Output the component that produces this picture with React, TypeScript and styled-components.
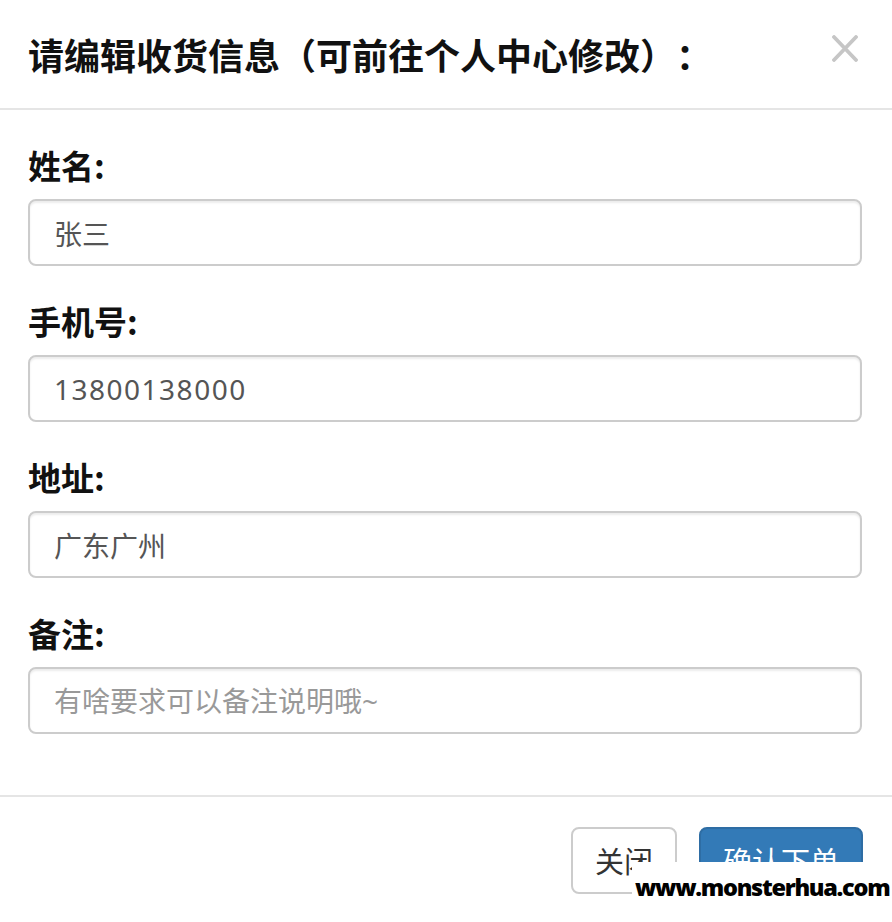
import React from "react";
import styled, { createGlobalStyle } from "styled-components";

const GlobalStyle = createGlobalStyle`
    html, body {
        margin: 0;
        padding: 0;
        background: #fff;
    }
    body {
        font-family: "Noto Sans", "Noto Sans CJK SC", sans-serif;
        color: #333;
        text-spacing-trim: space-all;
    }
`;

const Modal = styled.div`
    position: relative;
    width: 892px;
    height: 922px;
    overflow: hidden;
    background: #fff;
`;

const Header = styled.header`
    display: flex;
    justify-content: space-between;
    align-items: flex-start;
    padding: 30px 34px 30px 28px;
    border-bottom: 2px solid #e5e5e5;
`;

const Title = styled.h4`
    margin: 0;
    font-family: "Noto Sans CJK SC", sans-serif;
    font-size: 36px;
    font-weight: 700;
    line-height: 48px;
    color: #111;
    text-spacing-trim: space-all;
`;

const CloseButton = styled.button`
    margin-top: 5px;
    padding: 0;
    border: none;
    background: none;
    line-height: 0;
    cursor: pointer;
`;

const Body = styled.div`
    padding: 31px 30px 30px 28px;
`;

const FormGroup = styled.div`
    margin-bottom: 31px;
`;

const Label = styled.label`
    display: block;
    margin-bottom: 10px;
    font-family: "Noto Sans CJK SC", sans-serif;
    font-size: 33px;
    font-weight: 700;
    line-height: 48px;
    color: #111;
`;

const Input = styled.input<{ $tracking?: number }>`
    display: block;
    width: 100%;
    height: 67px;
    box-sizing: border-box;
    padding: 0 24px;
    border: 2px solid #ccc;
    border-radius: 8px;
    box-shadow: inset 0 2px 2px rgba(0, 0, 0, 0.075);
    font-family: "Noto Sans", "Noto Sans CJK SC", sans-serif;
    font-size: 28px;
    letter-spacing: ${(p) => p.$tracking ?? 0}px;
    color: #555;
    background: #fff;
    outline: none;

    &::placeholder {
        color: #999;
    }
`;

const Footer = styled.footer`
    display: flex;
    justify-content: flex-end;
    gap: 22px;
    padding: 30px 29px;
    border-top: 2px solid #e5e5e5;
`;

const Button = styled.button<{ $primary?: boolean }>`
    height: 67px;
    padding: 0 22px;
    border: 2px solid ${(p) => (p.$primary ? "#2e6da4" : "#ccc")};
    border-radius: 8px;
    background: ${(p) => (p.$primary ? "#337ab7" : "#fff")};
    color: ${(p) => (p.$primary ? "#fff" : "#333")};
    font-family: "Noto Sans CJK SC", sans-serif;
    font-size: 29px;
    line-height: 1;
    cursor: pointer;
`;

const Watermark = styled.div`
    position: absolute;
    right: 0;
    bottom: 0;
    width: 260px;
    height: 60px;
    padding: 10px 0 0 3px;
    box-sizing: border-box;
    background: #fff;
    font-family: "Open Sans", sans-serif;
    font-size: 23.5px;
    font-weight: 800;
    letter-spacing: -1.3px;
    line-height: 30px;
    color: #000;
    white-space: nowrap;
`;

function CloseIcon() {
    return (
        <svg width="26" height="27" viewBox="0 0 26 27">
            <path d="M2 2 L24 25 M24 2 L2 25" stroke="#c6c6c6" strokeWidth="3.8" strokeLinecap="round" />
        </svg>
    );
}

const fields = [
    { id: "name", label: "姓名:", value: "张三" },
    { id: "phone", label: "手机号:", value: "13800138000", tracking: 1.5 },
    { id: "address", label: "地址:", value: "广东广州" },
    { id: "remark", label: "备注:", value: "", placeholder: "有啥要求可以备注说明哦~" },
];

export default function App() {
    const [values, setValues] = React.useState<Record<string, string>>(() =>
        Object.fromEntries(fields.map((f) => [f.id, f.value])),
    );

    return (
        <>
            <GlobalStyle />
            <Modal>
                <Header>
                    <Title>请编辑收货信息（可前往个人中心修改）：</Title>
                    <CloseButton aria-label="关闭">
                        <CloseIcon />
                    </CloseButton>
                </Header>
                <Body>
                    {fields.map((f) => (
                        <FormGroup key={f.id}>
                            <Label htmlFor={f.id}>{f.label}</Label>
                            <Input
                                id={f.id}
                                type="text"
                                $tracking={f.tracking}
                                placeholder={f.placeholder}
                                value={values[f.id]}
                                onChange={(e) => setValues({ ...values, [f.id]: e.target.value })}
                            />
                        </FormGroup>
                    ))}
                </Body>
                <Footer>
                    <Button>关闭</Button>
                    <Button $primary>确认下单</Button>
                </Footer>
                <Watermark>www.monsterhua.com</Watermark>
            </Modal>
        </>
    );
}
